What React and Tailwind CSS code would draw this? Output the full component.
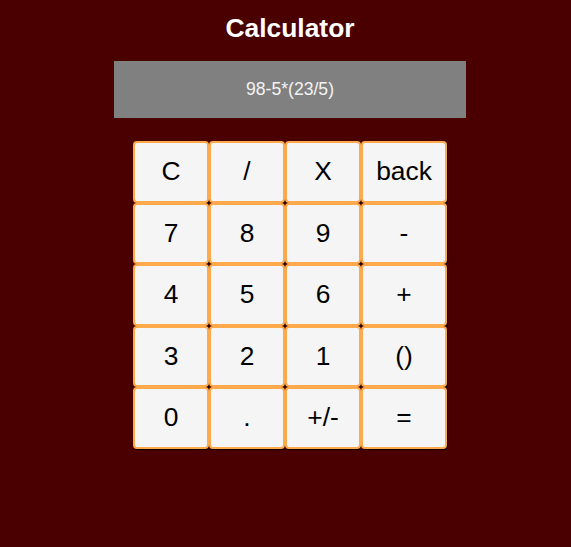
import React from 'react';

const rows = [
  ['C', '/', 'X', 'back'],
  ['7', '8', '9', '-'],
  ['4', '5', '6', '+'],
  ['3', '2', '1', '()'],
  ['0', '.', '+/-', '='],
];

const App = () => {
  return (
    <div className="min-h-[547px] w-full bg-[#4b0000] font-['Liberation_Sans',Arial,sans-serif] pl-[9px]">
      <div className="flex flex-col items-center pt-[13px]">
        <h1 className="text-[26.4px] leading-[30px] font-bold text-white">Calculator</h1>
        <div className="mt-[18px] w-[352px] h-[57px] bg-[#808080] flex items-center justify-center text-[17.6px] text-[#f3f3f3]">
          98-5*(23/5)
        </div>
        <div className="mt-[23px] flex flex-col">
          {rows.map((row, i) => (
            <div key={i} className="flex">
              {row.map((key, j) => (
                <button
                  key={key}
                  className={`${j === 3 ? 'w-[86px]' : 'w-[76px]'} h-[61.6px] flex items-center justify-center bg-[#f5f5f5] border-2 border-[#ffa94d] rounded-[4px] shadow-[1px_1px_1px_rgba(0,0,0,0.8)] text-[26.4px] text-black`}
                >
                  {key}
                </button>
              ))}
            </div>
          ))}
        </div>
      </div>
    </div>
  );
};

export default App;
